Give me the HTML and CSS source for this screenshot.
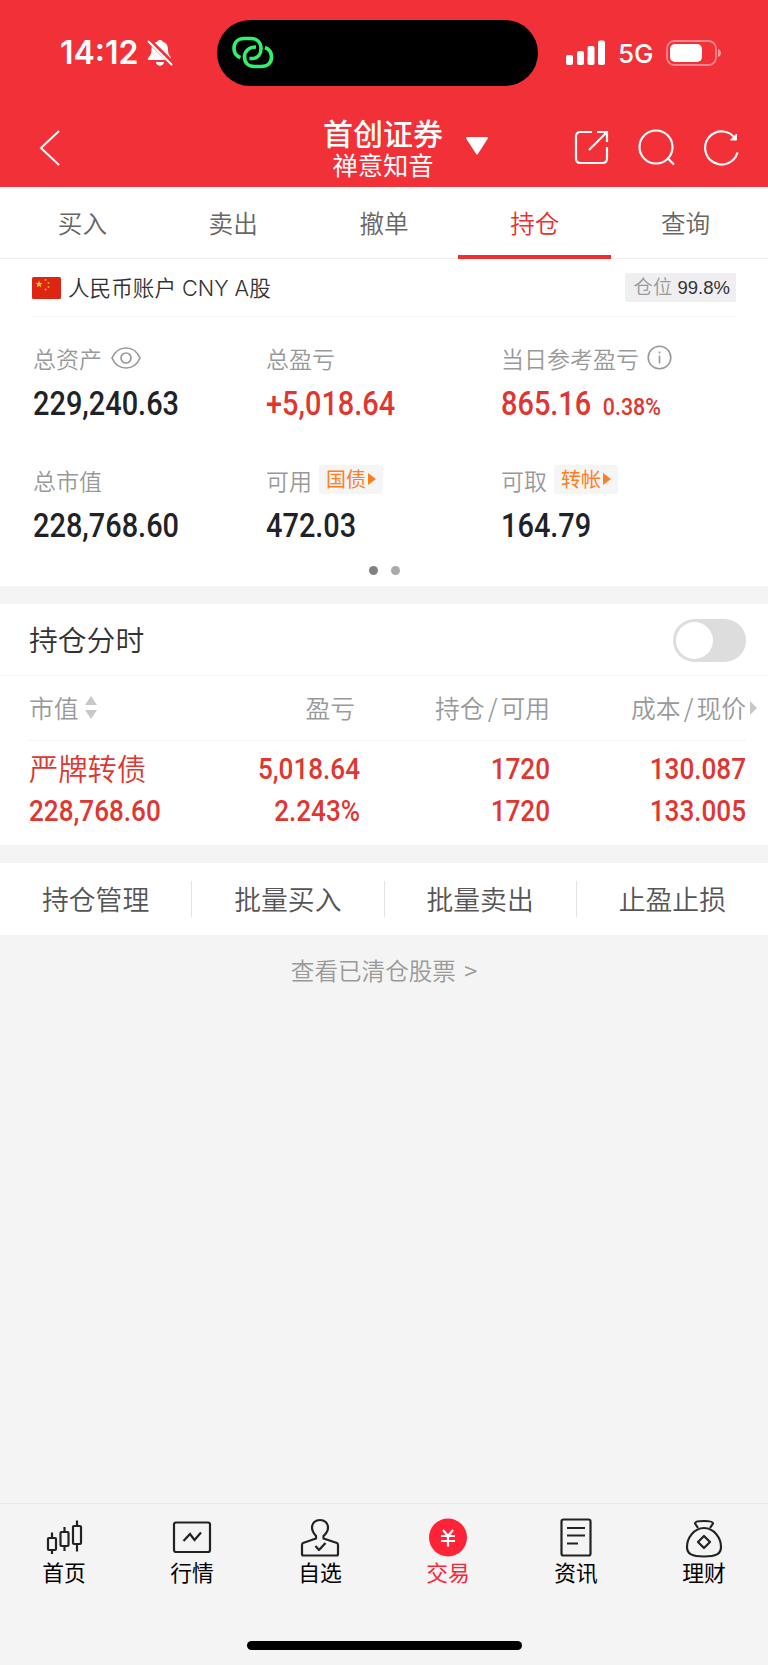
FILE: index.html
```html
<!DOCTYPE html>
<html lang="zh-CN">
<head>
    <meta charset="UTF-8">
    <meta name="viewport" content="width=device-width, initial-scale=1.0">
    <title>持仓</title>
    <link rel="stylesheet" href="styles.css">
</head>
<body>
    <div class="top">
        <div class="status">
            <span class="time">14:12</span>
            <svg class="bell" width="26" height="28" viewBox="0 0 26 28">
                <path d="M5 6C7 3.500 9 3 10.500 2.500C11 .5 15 .5 15.500 2.500C20 4 21 7 21 11C21 14.500 22 16 24 18.500V21H2C.5 21 .5 19.500 1.500 18.500C4 16 4.500 14 4.500 10Z" fill="#fff"/>
                <path d="M9 23H17C16.500 28 9.500 28 9 23Z" fill="#fff"/>
                <path d="M1.500 1L26 25" stroke="#f23037" stroke-width="5"/>
                <path d="M1.500 2.500L24.500 25.500" stroke="#fff" stroke-width="2" stroke-linecap="round"/>
            </svg>
            <div class="island">
                <svg width="42" height="34" viewBox="0 0 42 34" fill="none" stroke="#30f36b" stroke-width="3.600">
                    <path d="M8.500 21.500C4 20 2 16.500 2 12.500C2 6 6.500 2.500 12 2.500H19C25.500 2.500 29 7 29 12.500C29 18.500 25.500 22 21 22.500H17.500"/>
                    <path d="M24 11C17 11 12.500 15 12.500 21C12.500 27 16.500 30.500 22.500 30.500H29C35.500 30.500 39.500 27 39.500 21C39.500 16 37 13 33 11.500"/>
                </svg>
            </div>
            <svg class="signal" width="40" height="26" viewBox="0 0 40 26" fill="#fff">
                <rect x="0" y="15" width="7" height="10" rx="2"/>
                <rect x="11" y="11" width="7" height="14" rx="2"/>
                <rect x="21.500" y="6" width="7" height="19" rx="2"/>
                <rect x="32" y="0.500" width="7" height="24.500" rx="2"/>
            </svg>
            <span class="network">5G</span>
            <svg class="battery" width="56" height="26" viewBox="0 0 56 26">
                <rect x="1" y="1" width="49" height="24" rx="7.500" fill="none" stroke="#fff" stroke-opacity=".42" stroke-width="1.800"/>
                <rect x="4" y="4" width="32" height="18" rx="5" fill="#fff"/>
                <path d="M52 9C56 10 56 16 52 17Z" fill="#fff" fill-opacity=".5"/>
            </svg>
        </div>
        <div class="navbar">
            <svg class="back" width="22" height="38" viewBox="0 0 22 38" fill="none" stroke="#fff" stroke-width="2">
                <path d="M20 2L2 19L20 36"/>
            </svg>
            <div class="title">
                <h1>首创证券</h1>
                <p>禅意知音</p>
            </div>
            <svg class="caret" width="24" height="20" viewBox="0 0 24 20">
                <path d="M2 2H22L12 17.500Z" fill="#fff" stroke="#fff" stroke-width="2" stroke-linejoin="round"/>
            </svg>
            <div class="tools">
                <svg width="36" height="36" viewBox="0 0 36 36" fill="none" stroke="#fff" stroke-width="2.200">
                    <path d="M18 2H6.500Q2 2 2 6.500V28.500Q2 33 6.500 33H28.500Q33 33 33 28.500V17"/>
                    <path d="M23 2H33V12M33 2L15 20"/>
                </svg>
                <svg width="38" height="38" viewBox="0 0 38 38" fill="none" stroke="#fff" stroke-width="2.200">
                    <circle cx="18" cy="18" r="16.500"/>
                    <path d="M30 29.500L36 35.500"/>
                </svg>
                <svg width="36" height="38" viewBox="0 0 36 38" fill="none" stroke="#fff" stroke-width="2.200">
                    <path d="M33.500 23.500A16.500 16.500 0 1 1 31.500 10"/>
                    <path d="M32.500 5V11H26.500Z" fill="#fff" stroke-width="1"/>
                </svg>
            </div>
        </div>
    </div>

    <div class="tabs">
        <span>买入</span>
        <span>卖出</span>
        <span>撤单</span>
        <span class="active">持仓</span>
        <span>查询</span>
    </div>

    <div class="account">
        <div class="account-head">
            <svg width="29" height="22" viewBox="0 0 29 22">
                <rect width="29" height="22" rx="1.500" fill="#de2413"/>
                <path d="M7 3.500L8 6H10.500L8.500 7.600L9.200 10.200L7 8.700L4.800 10.200L5.500 7.600L3.500 6H6Z" fill="#ffd800"/>
                <g fill="#efb000"><circle cx="13.500" cy="3" r="1"/><circle cx="16.500" cy="6" r="1"/><circle cx="16.500" cy="10" r="1"/><circle cx="13.500" cy="12.500" r="1"/></g>
            </svg>
            <span class="account-name">人民币账户 CNY A股</span>
            <span class="position">仓位 <b>99.8%</b></span>
        </div>
        <div class="assets">
            <div class="asset">
                <div class="label">总资产
                    <svg class="eye" width="30" height="22" viewBox="0 0 30 22" fill="none" stroke="#999" stroke-width="1.700">
                        <path d="M1 11C4 4 9 1 15 1S26 4 29 11C26 18 21 21 15 21S4 18 1 11Z"/>
                        <circle cx="15" cy="11" r="5"/>
                    </svg>
                </div>
                <div class="num">229,240.63</div>
            </div>
            <div class="asset">
                <div class="label">总盈亏</div>
                <div class="num red">+5,018.64</div>
            </div>
            <div class="asset">
                <div class="label">当日参考盈亏
                    <svg class="info" width="25" height="25" viewBox="0 0 25 25" fill="none" stroke="#999" stroke-width="1.600">
                        <circle cx="12.500" cy="12.500" r="11.300"/>
                        <path d="M12.500 10.500V18.500M12.500 6.500V8.500"/>
                    </svg>
                </div>
                <div class="num red">865.16<small>0.38%</small></div>
            </div>
            <div class="asset">
                <div class="label">总市值</div>
                <div class="num">228,768.60</div>
            </div>
            <div class="asset">
                <div class="label">可用<span class="tag">国债</span></div>
                <div class="num">472.03</div>
            </div>
            <div class="asset">
                <div class="label">可取<span class="tag">转帐</span></div>
                <div class="num">164.79</div>
            </div>
        </div>
        <div class="dots"><i></i><i></i></div>
    </div>

    <div class="holdings">
        <div class="switch-row">
            <span>持仓分时</span>
            <div class="switch"></div>
        </div>
        <div class="row row-head">
            <div class="sortable">市值
                <svg width="12" height="23" viewBox="0 0 12 23" fill="#c8c8c8"><path d="M6 0L12 9H0ZM6 23L0 14H12Z"/></svg>
            </div>
            <div>盈亏</div>
            <div>持仓<i>/</i>可用</div>
            <div>成本<i>/</i>现价</div>
            <svg class="more" width="7" height="14" viewBox="0 0 7 14" fill="#c8c8c8"><path d="M0 0L7 7L0 14Z"/></svg>
        </div>
        <div class="row row-body">
            <div class="stock"><strong>严牌转债</strong><span class="n">228,768.60</span></div>
            <div><span class="n">5,018.64</span><span class="n">2.243%</span></div>
            <div><span class="n">1720</span><span class="n">1720</span></div>
            <div><span class="n">130.087</span><span class="n">133.005</span></div>
        </div>
    </div>

    <div class="actions">
        <span>持仓管理</span>
        <span>批量买入</span>
        <span>批量卖出</span>
        <span>止盈止损</span>
    </div>

    <div class="cleared">查看已清仓股票 <i>&gt;</i></div>

    <div class="tabbar">
        <div class="tab">
            <svg width="40" height="40" viewBox="0 0 40 40" fill="none" stroke="#222" stroke-width="2.200">
                <rect x="4" y="20" width="8" height="12" rx="1"/><path d="M8 14.500V20M8 32V36"/>
                <rect x="16.500" y="14" width="8" height="14" rx="1"/><path d="M20.500 9V14M20.500 28V33"/>
                <rect x="29" y="8" width="8" height="18" rx="1"/><path d="M33 2.500V8M33 26V33.500"/>
            </svg>
            <span>首页</span>
        </div>
        <div class="tab">
            <svg width="40" height="40" viewBox="0 0 40 40" fill="none" stroke="#222" stroke-width="2.200">
                <rect x="2" y="4.500" width="36" height="29.500" rx="2"/>
                <path d="M11.500 23L18 16L22.500 22L29 14.500"/>
            </svg>
            <span>行情</span>
        </div>
        <div class="tab">
            <svg width="40" height="40" viewBox="0 0 40 40" fill="none" stroke="#222" stroke-width="2.200" stroke-linejoin="round">
                <path d="M16 18C12.500 14 12 12.500 12 9.500C12 5 15.500 2 20 2S28 5 28 9.500C28 13 27 15 23.500 18V20.500L37 25Q38 25.500 38 27V36Q38 37.500 36.500 37.500H3.500Q2 37.500 2 36V27Q2 25.500 3 25L16 20.500Z"/>
                <path d="M15.500 28L19 32L25.500 25"/>
            </svg>
            <span>自选</span>
        </div>
        <div class="tab current">
            <svg width="40" height="40" viewBox="0 0 40 40">
                <circle cx="20" cy="19.500" r="19" fill="#ff2337"/>
                <path d="M15 12L20 18L25 12M13 18H27M13 23H27M20 18V28.500" fill="none" stroke="#fff" stroke-width="2.200"/>
            </svg>
            <span>交易</span>
        </div>
        <div class="tab">
            <svg width="40" height="40" viewBox="0 0 40 40" fill="none" stroke="#222" stroke-width="2.200">
                <rect x="5.500" y="1.500" width="29" height="36" rx="2"/>
                <path d="M11 10H29M11 17.500H29M11 25.500H22"/>
            </svg>
            <span>资讯</span>
        </div>
        <div class="tab">
            <svg width="40" height="40" viewBox="0 0 40 40" fill="none" stroke="#222" stroke-width="2.200" stroke-linejoin="round">
                <path d="M14 10L11 5.500Q11 3 20 3T29 5.500L26 10"/>
                <path d="M20 10C10 10 3 20 3 29C3 36 8 38.500 20 38.500S37 36 37 29C37 20 30 10 20 10Z"/>
                <path d="M20 18L26 24L20 30L14 24Z"/>
            </svg>
            <span>理财</span>
        </div>
    </div>
    <div class="home-bar"></div>
</body>
</html>
```

FILE: styles.css
```css
* {
    margin: 0;
    padding: 0;
    box-sizing: border-box;
}

body {
    width: 768px;
    height: 1665px;
    display: flex;
    flex-direction: column;
    background-color: #f4f4f4;
    font-family: "Noto Sans CJK SC", sans-serif;
    font-weight: 350;
    color: #333;
    overflow: hidden;
}

svg {
    display: block;
    flex: none;
}

i {
    font-style: normal;
}

/* status bar and title */
.top {
    height: 187px;
    background-color: #f23037;
    color: #fff;
}

.status {
    height: 105px;
    display: flex;
    align-items: center;
    padding-left: 60px;
    font-family: Inter, sans-serif;
}

.time {
    width: 87px;
    font-size: 32px;
    font-weight: 600;
    line-height: 40px;
}

.island {
    width: 321px;
    height: 66px;
    margin: 1px 28px 0 44px;
    padding: 16px 0 0 15px;
    border-radius: 33px;
    background-color: #000;
}

.network {
    width: 48px;
    margin: 1px 0 0 12px;
    font-size: 26px;
    font-weight: 450;
}

.navbar {
    height: 82px;
    display: flex;
    align-items: center;
    padding-left: 39px;
}

.back {
    margin-top: 3px;
}

.title {
    width: 124px;
    margin: 2px 0 0 260px;
    text-align: center;
}

.title h1 {
    font-size: 30px;
    font-weight: 500;
    line-height: 34px;
}

.title p {
    font-size: 25.300px;
    line-height: 30px;
    font-weight: 400;
}

.caret {
    margin: -1px 0 0 20px;
}

.tools {
    display: flex;
    align-items: center;
    margin: 3px 0 0 85px;
    gap: 28px;
}

/* trade tabs */
.tabs {
    height: 72px;
    display: flex;
    padding: 0 7px 0 7px;
    background-color: #fff;
    border-bottom: 1px solid #eee;
}

.tabs span {
    flex: 1;
    height: 72px;
    font-size: 24.600px;
    line-height: 71px;
    text-align: center;
    color: #666;
}

.tabs .active {
    margin: 0 -1px;
    padding: 0 1px;
    color: #ee2d2d;
    border-bottom: 4px solid #ee2d2d;
}

/* account */
.account {
    height: 327px;
    padding: 0 32px;
    background-color: #fff;
}

.account-head {
    height: 58px;
    display: flex;
    align-items: center;
    border-bottom: 1px solid #f3f3f3;
}

.account-name {
    margin-left: 7px;
    font-family: Inter, "Noto Sans CJK SC", sans-serif;
    font-size: 21.600px;
    line-height: 30px;
}

.position {
    height: 29px;
    margin-left: auto;
    padding: 0 6px 0 9px;
    border-radius: 2px;
    background-color: #efeff1;
    font-family: "Liberation Sans", "Noto Sans CJK SC", sans-serif;
    font-size: 19.300px;
    line-height: 30px;
    color: #999;
}

.position b {
    font-size: 18.500px;
    font-weight: 400;
    color: #333;
}

.assets {
    display: grid;
    grid-template-columns: 233px 235px 1fr;
    grid-auto-rows: 122px;
    padding: 23px 0 0 1px;
}

.label {
    height: 36px;
    display: flex;
    align-items: center;
    font-size: 23px;
    line-height: 32px;
    padding-bottom: 1px;
    white-space: nowrap;
    color: #999;
}

.eye {
    margin-left: 9px;
}

.info {
    margin-left: 8px;
}

.num {
    width: max-content;
    margin-top: 9px;
    font-family: Roboto, sans-serif;
    font-size: 32.500px;
    font-weight: 500;
    line-height: 38px;
    color: #1f2329;
    transform: scaleX(.89);
    transform-origin: left;
}

.num small {
    margin-left: 13px;
    font-size: 24px;
}

.red {
    color: #df3631;
}

.tag {
    height: 29px;
    display: flex;
    align-items: center;
    margin-left: 7px;
    padding: 0 7px 1px;
    border-radius: 3px;
    background-color: #f5f5f5;
    font-size: 20px;
    font-weight: 400;
    color: #ff7e1f;
}

.tag::after {
    content: "";
    margin-left: 2px;
    border-left: 8px solid #ff7e1f;
    border-top: 6px solid transparent;
    border-bottom: 6px solid transparent;
}

.dots {
    display: flex;
    justify-content: center;
    gap: 13px;
    margin-top: -18px;
}

.dots i {
    width: 9px;
    height: 9px;
    border-radius: 50%;
    background-color: #808080;
}

.dots i + i {
    background-color: #aaa;
}

/* holdings */
.holdings {
    height: 241px;
    margin-top: 18px;
    background-color: #fff;
}

.switch-row {
    height: 72px;
    display: flex;
    align-items: center;
    justify-content: space-between;
    padding: 0 22px 0 29px;
    border-bottom: 1px solid #f3f3f3;
    font-size: 28.800px;
}

.switch-row span {
    margin-top: -3px;
}

.switch {
    width: 73px;
    height: 43px;
    margin-top: 2px;
    padding: 3px;
    border-radius: 22px;
    background-color: #ddd;
}

.switch::before {
    content: "";
    display: block;
    width: 37px;
    height: 37px;
    border-radius: 50%;
    background-color: #fff;
}

.row {
    display: grid;
    grid-template-columns: 165px 166px 190px 1fr;
    margin: 0 22px 0 29px;
    text-align: right;
}

.row-head {
    position: relative;
    height: 65px;
    border-bottom: 1px solid #f3f3f3;
    font-size: 24.800px;
    line-height: 62px;
    color: #999;
}

.row-head div:nth-child(2) {
    padding-right: 5px;
}

.row-head i {
    padding: 0 3px;
}

.sortable {
    height: 62px;
    display: flex;
    align-items: center;
    gap: 6px;
}

.more {
    position: absolute;
    right: -11px;
    top: 25px;
}

.row-body {
    padding-top: 7px;
    font-weight: 400;
    color: #df3631;
}

.row-body .stock {
    text-align: left;
}

.row-body strong {
    display: block;
    height: 42px;
    font-size: 29.300px;
    font-weight: 350;
    line-height: 39px;
    white-space: nowrap;
}

.n {
    display: block;
    font-family: Roboto, sans-serif;
    font-size: 29px;
    font-weight: 500;
    line-height: 42px;
    transform: scaleX(.9);
    transform-origin: right;
}

.stock .n {
    transform-origin: left;
}

/* actions */
.actions {
    height: 72px;
    display: flex;
    align-items: center;
    margin-top: 18px;
    background-color: #fff;
}

.actions span {
    flex: 1;
    height: 36px;
    border-right: 1px solid #e3e3e3;
    font-size: 26.800px;
    line-height: 36px;
    text-align: center;
    color: #555;
}

.actions span:last-child {
    border-right: 0;
}

.cleared {
    margin-top: 17px;
    font-size: 23.600px;
    line-height: 36px;
    text-align: center;
    color: #999;
}

.cleared i {
    margin-left: 3px;
}

/* bottom bar */
.tabbar {
    height: 138px;
    display: flex;
    margin-top: auto;
    padding-top: 14px;
    border-top: 1px solid #e9e9e9;
}

.tab {
    flex: 1;
    display: flex;
    flex-direction: column;
    align-items: center;
    font-size: 21.800px;
    font-weight: 400;
    line-height: 28px;
    color: #000;
}

.current {
    color: #ff2337;
}

.home-bar {
    width: 275px;
    height: 9px;
    margin: 0 auto 15px;
    border-radius: 5px;
    background-color: #000;
}
```
